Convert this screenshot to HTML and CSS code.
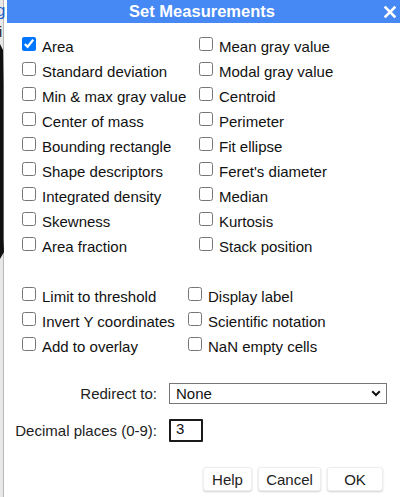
FILE: index.html
```html
<!DOCTYPE html>
<html>
<head>
<meta charset="utf-8">
<link rel="stylesheet" href="styles.css">
</head>
<body>
<div class="underlay">
  <span class="ul-g">g</span>
  <span class="ul-i">i</span>
  <svg class="ul-wedge" width="6" height="220" viewBox="0 0 6 220"><path d="M0 0 L3 6 L3.5 40 L3.5 195 L4 208 L0 215 Z" fill="#111"/></svg>
</div>
<div class="dialog">
  <div class="titlebar">
    <span class="title">Set Measurements</span>
    <svg class="close" width="12" height="12" viewBox="0 0 12 12"><path d="M1.5 1.5 L10.5 10.5 M10.5 1.5 L1.5 10.5" stroke="#fff" stroke-width="2.6" stroke-linecap="square"/></svg>
  </div>
  <div class="body">
    <div class="grid g1">
      <label class="item"><input type="checkbox" checked><span>Area</span></label>
      <label class="item"><input type="checkbox"><span>Mean gray value</span></label>
      <label class="item"><input type="checkbox"><span>Standard deviation</span></label>
      <label class="item"><input type="checkbox"><span>Modal gray value</span></label>
      <label class="item"><input type="checkbox"><span>Min &amp; max gray value</span></label>
      <label class="item"><input type="checkbox"><span>Centroid</span></label>
      <label class="item"><input type="checkbox"><span>Center of mass</span></label>
      <label class="item"><input type="checkbox"><span>Perimeter</span></label>
      <label class="item"><input type="checkbox"><span>Bounding rectangle</span></label>
      <label class="item"><input type="checkbox"><span>Fit ellipse</span></label>
      <label class="item"><input type="checkbox"><span>Shape descriptors</span></label>
      <label class="item"><input type="checkbox"><span>Feret's diameter</span></label>
      <label class="item"><input type="checkbox"><span>Integrated density</span></label>
      <label class="item"><input type="checkbox"><span>Median</span></label>
      <label class="item"><input type="checkbox"><span>Skewness</span></label>
      <label class="item"><input type="checkbox"><span>Kurtosis</span></label>
      <label class="item"><input type="checkbox"><span>Area fraction</span></label>
      <label class="item"><input type="checkbox"><span>Stack position</span></label>
    </div>
    <div class="grid g2">
      <label class="item"><input type="checkbox"><span>Limit to threshold</span></label>
      <label class="item"><input type="checkbox"><span>Display label</span></label>
      <label class="item"><input type="checkbox"><span>Invert Y coordinates</span></label>
      <label class="item"><input type="checkbox"><span>Scientific notation</span></label>
      <label class="item"><input type="checkbox"><span>Add to overlay</span></label>
      <label class="item"><input type="checkbox"><span>NaN empty cells</span></label>
    </div>
    <div class="fields">
      <span class="flabel">Redirect to:</span>
      <div class="select"><span>None</span>
        <svg class="chev" width="10" height="7" viewBox="0 0 10 7"><path d="M1.2 1.3 L5 5 L8.8 1.3" fill="none" stroke="#111" stroke-width="2"/></svg>
      </div>
      <span class="flabel">Decimal places (0-9):</span>
      <div class="numbox">3</div>
    </div>
    <div class="buttons">
      <button class="btn b-help">Help</button>
      <button class="btn b-cancel">Cancel</button>
      <button class="btn b-ok">OK</button>
    </div>
  </div>
</div>
</body>
</html>
```
FILE: styles.css
```css
html, body {
  margin: 0;
  padding: 0;
}
body {
  width: 400px;
  height: 497px;
  overflow: hidden;
  position: relative;
  font-family: "Liberation Sans", Arial, sans-serif;
  color: #111;
  background: linear-gradient(to right, #e8e8e8 0, #e8e8e8 3px, #b8b8b8 3px, #b8b8b8 4px, #ffffff 4px);
}
.underlay {
  position: absolute;
  left: 0;
  top: 0;
  width: 7px;
  height: 497px;
}
.ul-g {
  position: absolute;
  left: -4px;
  top: 1px;
  font-size: 17px;
  color: #1a5fc8;
  text-decoration: underline;
}
.ul-i {
  position: absolute;
  left: -1px;
  top: 24px;
  font-size: 14px;
  color: #111;
}
.ul-wedge {
  position: absolute;
  left: 0;
  top: 44px;
}
.dialog {
  position: relative;
}
.titlebar {
  margin-left: 7px;
  height: 23px;
  background: #4688f4;
  display: flex;
  align-items: center;
  justify-content: center;
  position: relative;
}
.title {
  color: #fff;
  font-weight: bold;
  font-size: 16.5px;
  margin-left: -3px;
}
.close {
  position: absolute;
  right: 4px;
  top: 6px;
}
.body {
  padding: 10px 17px 0 22px;
}
.grid {
  display: grid;
}
.g1 {
  grid-template-columns: 177px 1fr;
}
.g2 {
  grid-template-columns: 166px 1fr;
  margin-top: 25px;
}
.item {
  display: flex;
  align-items: flex-start;
  height: 25px;
  line-height: 25px;
  font-size: 15px;
  white-space: nowrap;
}
.item input {
  width: 14px;
  height: 14px;
  margin: 4px 6px 0 0;
  flex: none;
  accent-color: #0075ff;
}
.item span {
  position: relative;
  top: 1px;
}
.fields {
  margin-top: 25px;
  margin-left: -22px;
  display: grid;
  grid-template-columns: 157px 1fr;
  column-gap: 12px;
  row-gap: 15px;
  align-items: center;
  font-size: 15px;
}
.flabel {
  text-align: right;
  color: #222;
  white-space: nowrap;
}
.select {
  box-sizing: border-box;
  width: 218px;
  height: 21px;
  border: 1px solid #767676;
  display: flex;
  align-items: center;
  justify-content: space-between;
  padding: 0 5px 0 6px;
  color: #111;
}
.numbox {
  box-sizing: border-box;
  width: 34px;
  height: 23px;
  border: 2px solid #1a1a1a;
  border-radius: 1px;
  padding: 0 0 0 5px;
  line-height: 16px;
  font-size: 15px;
  color: #111;
}
.buttons {
  margin-top: 25px;
  display: flex;
  justify-content: flex-end;
  gap: 6px;
}
.btn {
  height: 24px;
  padding: 0;
  border: 1px solid #eeeeee;
  border-radius: 3px;
  background: #fff;
  box-shadow: 0 1px 2px rgba(0,0,0,0.18);
  font-family: "Liberation Sans", Arial, sans-serif;
  font-size: 15px;
  color: #222;
}
.b-help { width: 49px; }
.b-cancel { width: 63px; }
.b-ok { width: 56px; }
```
